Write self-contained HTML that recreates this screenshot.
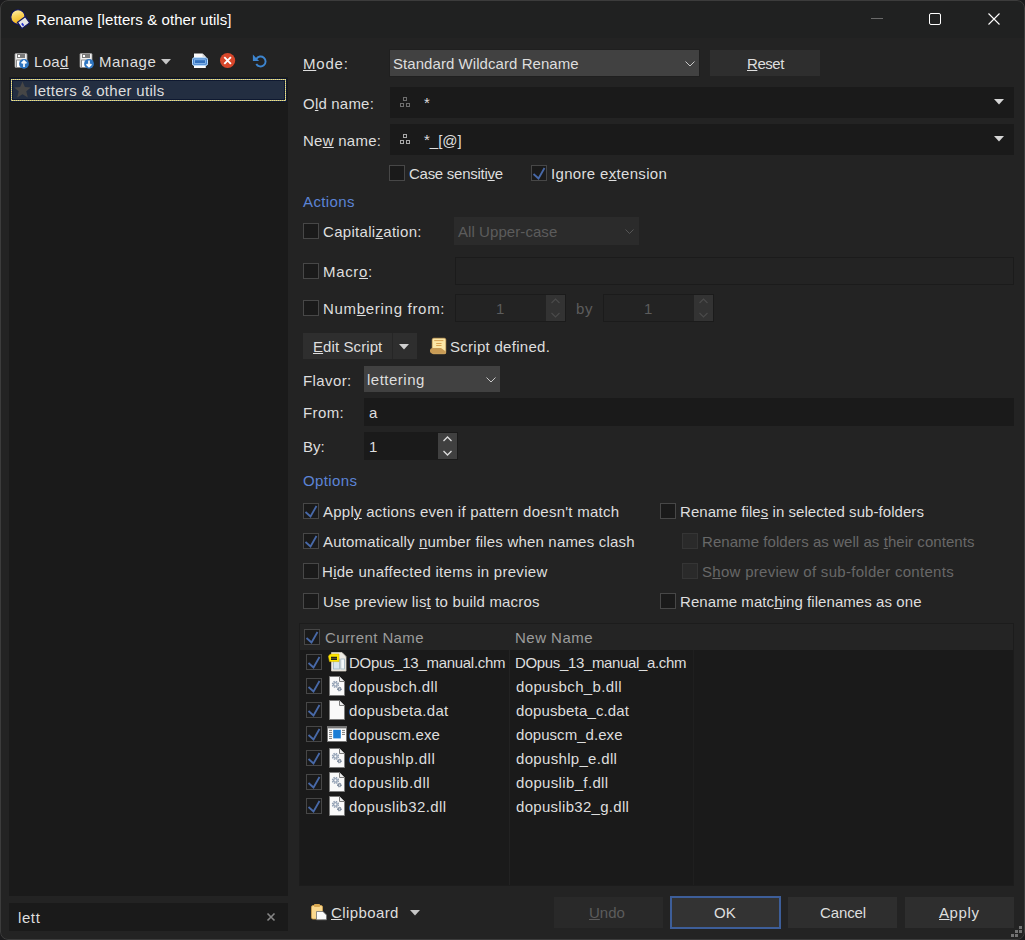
<!DOCTYPE html>
<html><head><meta charset="utf-8">
<style>
*{margin:0;padding:0;box-sizing:border-box}
html,body{width:1025px;height:940px;overflow:hidden;background:#1b1b1d}
body{position:relative;font-family:"Liberation Sans",sans-serif}
#win{position:absolute;left:0;top:0;width:1025px;height:940px;border-radius:8px;background:#232323;overflow:hidden}
#frame{position:absolute;left:0;top:0;width:1025px;height:940px;border:1px solid #3c3c3c;border-radius:8px}
.a{position:absolute}
.t{position:absolute;font-size:15px;line-height:20px;height:20px;white-space:pre;color:#dedede}
.u{text-decoration:underline;text-decoration-thickness:1px;text-underline-offset:1px}
.dis{color:#5c5c5c}
.box{position:absolute;background:#1a1a1a}
.cmb{position:absolute;background:#414141}
.btn{position:absolute;background:#2e2e2e}
.cb{position:absolute;width:16px;height:16px;border:1px solid #474747;background:#1a1a1a}
.cbd{position:absolute;width:16px;height:16px;border:1px solid #353535;background:#2a2a2a}
.hdr{color:#5c84d6}
svg{position:absolute;overflow:visible}
</style></head><body>
<svg width="0" height="0" style="position:absolute">
  <defs>
    <symbol id="chk" viewBox="0 0 16 16"><path d="M2.5 9 L7.5 13.5 L13.5 3" fill="none" stroke="#4869a8" stroke-width="1.8" stroke-linejoin="miter"/></symbol>
    <symbol id="page" viewBox="0 0 16 20"><path d="M0.5 0.5 H10.5 L15.5 5.5 V19.5 H0.5 Z" fill="#f9f9f9" stroke="#7b7b7b"/><path d="M10.5 0.5 V5.5 H15.5" fill="#ececec" stroke="#7b7b7b"/></symbol>
    <symbol id="gear" viewBox="0 0 10 10"><circle cx="5" cy="5" r="3.9" fill="none" stroke="#95a3b6" stroke-width="2" stroke-dasharray="1.9 1.16"/><circle cx="5" cy="5" r="2.3" fill="none" stroke="#95a3b6" stroke-width="1.8"/></symbol>
    <symbol id="gear2" viewBox="0 0 10 10"><circle cx="5" cy="5" r="3.9" fill="none" stroke="#5f6f86" stroke-width="2" stroke-dasharray="1.9 1.16"/><circle cx="5" cy="5" r="2.3" fill="none" stroke="#5f6f86" stroke-width="1.8"/></symbol>
  </defs>
</svg>
<div id="win">
  <!-- title bar -->
  <div class="a" style="left:0;top:0;width:1025px;height:38px;background:#202121"></div>
  <svg style="left:10px;top:9px" width="20" height="20" viewBox="0 0 20 20">
    <defs><linearGradient id="gy" x1="0" y1="0" x2="0.3" y2="1"><stop offset="0" stop-color="#fff3c0"/><stop offset="0.5" stop-color="#f9d25a"/><stop offset="1" stop-color="#f2b51c"/></linearGradient></defs>
    <circle cx="8" cy="8" r="7.2" fill="url(#gy)" stroke="#101563" stroke-width="1.1"/>
    <g transform="translate(13.6 13.6) rotate(-36)"><rect x="-4.8" y="-3.8" width="9.6" height="7.6" fill="#e4e4e4" stroke="#101563" stroke-width="1.2"/><rect x="-3.4" y="0.2" width="3" height="1.8" fill="#2330d0" transform="rotate(90 -1.9 1.1)"/></g>
  </svg>
  <div class="t" style="letter-spacing:0.07px;left:36px;top:10px;color:#fff">Rename [letters &amp; other utils]</div>
  <div class="a" style="left:871px;top:18px;width:12px;height:1px;background:#6a6a6a"></div>
  <div class="a" style="left:929px;top:13px;width:12px;height:12px;border:1px solid #fff;border-radius:2px"></div>
  <svg style="left:988px;top:13px" width="12" height="12" viewBox="0 0 12 12"><path d="M0.5 0.5 L11.5 11.5 M11.5 0.5 L0.5 11.5" stroke="#fff" stroke-width="1.1"/></svg>

  <!-- left panel toolbar -->
  <svg style="left:14px;top:53px" width="16" height="16" viewBox="0 0 16 16">
    <rect x="1" y="0.5" width="12" height="14" rx="1" fill="#eeeeee" stroke="#9a9a9a" stroke-width="0.8"/>
    <rect x="3" y="1" width="8" height="4" fill="#7a7a7a"/><rect x="4" y="2" width="2" height="2" fill="#fff"/>
    <rect x="2.6" y="7" width="8.8" height="7.4" fill="#fff" stroke="#777" stroke-width="0.8"/>
    <circle cx="10" cy="10.8" r="4.9" fill="#2f76c1"/><path d="M10 14 V8.2 M7.6 10.4 L10 8 L12.4 10.4" stroke="#fff" stroke-width="1.7" fill="none"/>
  </svg>
  <div class="t" style="letter-spacing:0.3px;left:34px;top:52px">Loa<span class="u">d</span></div>
  <svg style="left:79px;top:53px" width="16" height="16" viewBox="0 0 16 16">
    <rect x="1" y="0.5" width="12" height="14" rx="1" fill="#eeeeee" stroke="#9a9a9a" stroke-width="0.8"/>
    <rect x="3" y="1" width="8" height="4" fill="#7a7a7a"/><rect x="4" y="2" width="2" height="2" fill="#fff"/>
    <rect x="2.6" y="7" width="8.8" height="7.4" fill="#fff" stroke="#777" stroke-width="0.8"/>
    <circle cx="10" cy="10.8" r="4.9" fill="#2f76c1"/><path d="M10 7.6 V13.4 M7.6 11.2 L10 13.6 L12.4 11.2" stroke="#fff" stroke-width="1.7" fill="none"/>
  </svg>
  <div class="t" style="letter-spacing:0.5px;left:99px;top:52px">Mana<span class="u">g</span>e</div>
  <svg style="left:161px;top:59px" width="10" height="6" viewBox="0 0 10 6"><path d="M0 0 H10 L5 5.5 Z" fill="#c6c6c6"/></svg>
  <svg style="left:192px;top:53px" width="16" height="16" viewBox="0 0 16 16">
    <path d="M2 0.5 H10.5 L13.8 3.8 V15 H2 Z" fill="#fafafa"/><path d="M10.5 0.5 V3.8 H13.8 Z" fill="#cfcfcf"/>
    <rect x="0.5" y="4.8" width="15" height="7.6" rx="1.6" fill="#4a86cf" stroke="#bcdfff" stroke-width="1"/>
    <rect x="2.6" y="6.8" width="10.8" height="3.6" fill="#3270bd" stroke="#9cc8f2" stroke-width="0.7"/>
  </svg>
  <svg style="left:220px;top:53px" width="16" height="16" viewBox="0 0 16 16">
    <circle cx="7.6" cy="7.5" r="7.6" fill="#d8472b"/><path d="M4.3 4.2 L10.9 10.8 M10.9 4.2 L4.3 10.8" stroke="#fff" stroke-width="1.9"/>
  </svg>
  <svg style="left:252px;top:53px" width="16" height="16" viewBox="0 0 16 16">
    <path d="M4.3 5.9 A5 5 0 1 1 4.26 10.98" fill="none" stroke="#3d85cf" stroke-width="1.9"/>
    <path d="M0.9 1.6 V8 H7.1 Z" fill="#3d85cf"/>
  </svg>

  <!-- left list -->
  <div class="box" style="left:9px;top:77px;width:279px;height:819px"></div>
  <div class="a" style="left:10px;top:78px;width:277px;height:24px;background:#232e41;border:1px solid #0d1830"></div>
  <svg style="left:10px;top:78px" width="277" height="24" viewBox="0 0 277 24"><rect x="2.5" y="2.5" width="272" height="19" fill="none" stroke="#0e1830" shape-rendering="crispEdges"/><rect x="1.5" y="1.5" width="274" height="21" fill="none" stroke="#a9a68c" shape-rendering="crispEdges"/><rect x="1.5" y="1.5" width="274" height="21" fill="none" stroke="#f2e67a" stroke-dasharray="1 1" stroke-dashoffset="0.5" shape-rendering="crispEdges"/></svg>
  <svg style="left:14px;top:81px" width="18" height="18" viewBox="0 0 18 18"><path d="M8.5 0.5 L10.9 6 L16.8 6.4 L12.3 10.3 L13.8 16.6 L8.5 13.2 L3.2 16.6 L4.7 10.3 L0.2 6.4 L6.1 6 Z" fill="#464646"/></svg>
  <div class="t" style="letter-spacing:0.3px;left:34px;top:81px">letters &amp; other utils</div>
  <div class="box" style="left:9px;top:903px;width:279px;height:28px"></div>
  <div class="t" style="letter-spacing:0.6px;left:18px;top:908px">lett</div>
  <svg style="left:267px;top:913px" width="8" height="8" viewBox="0 0 8 8"><path d="M0.5 0.5 L7.5 7.5 M7.5 0.5 L0.5 7.5" stroke="#868686" stroke-width="1.6"/></svg>

  <!-- right panel -->
  <div class="t" style="letter-spacing:0.8px;left:303px;top:54px"><span class="u">M</span>ode:</div>
  <div class="cmb" style="left:390px;top:50px;width:309px;height:26px;box-shadow:0 0 0 1px #1f1f1f"></div>
  <div class="t" style="letter-spacing:0.06px;left:393px;top:54px">Standard Wildcard Rename</div>
  <svg style="left:685px;top:61px" width="10" height="6" viewBox="0 0 10 6"><path d="M0.5 0.5 L5 5 L9.5 0.5" fill="none" stroke="#c8c8c8" stroke-width="1"/></svg>
  <div class="btn" style="left:710px;top:50px;width:110px;height:26px"></div>
  <div class="t" style="letter-spacing:-0.45px;left:747px;top:54px"><span class="u">R</span>eset</div>

  <div class="t" style="letter-spacing:0.2px;left:303px;top:94px">O<span class="u">l</span>d name:</div>
  <div class="box" style="left:390px;top:87px;width:624px;height:31px"></div>
  <svg style="left:400px;top:97px" width="10" height="10" viewBox="0 0 10 10"><g fill="none" stroke="#6e6e6e" stroke-width="1"><rect x="3.5" y="0.5" width="3" height="3"/><rect x="0.5" y="6.5" width="3" height="3"/><rect x="6.5" y="6.5" width="3" height="3"/></g></svg>
  <div class="t" style="left:424px;top:93px">*</div>
  <svg style="left:994px;top:99px" width="10" height="6" viewBox="0 0 10 6"><path d="M0 0 H10 L5 5.5 Z" fill="#d6d6d6"/></svg>
  <div class="t" style="letter-spacing:0.25px;left:303px;top:131px">Ne<span class="u">w</span> name:</div>
  <div class="box" style="left:390px;top:124px;width:624px;height:31px"></div>
  <svg style="left:400px;top:134px" width="10" height="10" viewBox="0 0 10 10"><g fill="none" stroke="#a8a8a8" stroke-width="1"><rect x="3.5" y="0.5" width="3" height="3"/><rect x="0.5" y="6.5" width="3" height="3"/><rect x="6.5" y="6.5" width="3" height="3"/></g></svg>
  <div class="t" style="left:424px;top:131px"><span style="position:relative;top:-1px">*</span>_[@]</div>
  <svg style="left:994px;top:136px" width="10" height="6" viewBox="0 0 10 6"><path d="M0 0 H10 L5 5.5 Z" fill="#d6d6d6"/></svg>

  <div class="cb" style="left:389px;top:165px"></div>
  <div class="t" style="letter-spacing:-0.27px;left:409px;top:164px">Case sensiti<span class="u">v</span>e</div>
  <div class="cb" style="left:531px;top:165px"><svg style="left:-1px;top:-1px" width="16" height="16"><use href="#chk"/></svg></div>
  <div class="t" style="letter-spacing:0.33px;left:551px;top:164px">Ignore e<span class="u">x</span>tension</div>

  <div class="t hdr" style="letter-spacing:0.4px;left:303px;top:192px">Actions</div>
  <div class="cb" style="left:303px;top:223px"></div>
  <div class="t" style="letter-spacing:0.3px;left:323px;top:222px">Capitali<span class="u">z</span>ation:</div>
  <div class="a" style="left:454px;top:217px;width:185px;height:28px;background:#2b2b2b"></div>
  <div class="t dis" style="letter-spacing:0.07px;left:458px;top:222px">All Upper-case</div>
  <svg style="left:625px;top:229px" width="9" height="5" viewBox="0 0 9 5"><path d="M0.5 0.5 L4.5 4.5 L8.5 0.5" fill="none" stroke="#565656" stroke-width="1"/></svg>

  <div class="cb" style="left:303px;top:263px"></div>
  <div class="t" style="letter-spacing:0.67px;left:323px;top:262px">Macr<span class="u">o</span>:</div>
  <div class="a" style="left:455px;top:257px;width:559px;height:28px;border:1px solid #1b1b1b"></div>

  <div class="cb" style="left:303px;top:300px"></div>
  <div class="t" style="letter-spacing:0.7px;left:323px;top:299px">Num<span class="u">b</span>ering from:</div>
  <div class="a" style="left:455px;top:294px;width:111px;height:28px;border:1px solid #1b1b1b"></div>
  <div class="a" style="left:546px;top:295px;width:19px;height:26px;background:#333"></div>
  <svg style="left:551px;top:298px" width="9" height="20" viewBox="0 0 9 20"><path d="M0.5 5 L4.5 1 L8.5 5 M0.5 15 L4.5 19 L8.5 15" fill="none" stroke="#4a4a4a" stroke-width="1.2"/></svg>
  <div class="t dis" style="left:496px;top:299px">1</div>
  <div class="t dis" style="letter-spacing:0.6px;left:576px;top:299px">by</div>
  <div class="a" style="left:603px;top:294px;width:111px;height:28px;border:1px solid #1b1b1b"></div>
  <div class="a" style="left:694px;top:295px;width:19px;height:26px;background:#333"></div>
  <svg style="left:699px;top:298px" width="9" height="20" viewBox="0 0 9 20"><path d="M0.5 5 L4.5 1 L8.5 5 M0.5 15 L4.5 19 L8.5 15" fill="none" stroke="#4a4a4a" stroke-width="1.2"/></svg>
  <div class="t dis" style="left:644px;top:299px">1</div>

  <div class="btn" style="left:303px;top:333px;width:114px;height:26px"></div>
  <div class="a" style="left:392px;top:333px;width:1px;height:26px;background:#262626"></div>
  <div class="t" style="letter-spacing:0.09px;left:313px;top:337px"><span class="u">E</span>dit Script</div>
  <svg style="left:399px;top:344px" width="10" height="6" viewBox="0 0 10 6"><path d="M0 0 H10 L5 5.5 Z" fill="#d0d0d0"/></svg>
  <svg style="left:430px;top:338px" width="16" height="16" viewBox="0 0 16 16">
    <rect x="2.2" y="0.2" width="13.6" height="15.6" rx="1.5" fill="#fde7a6" stroke="#e0b060" stroke-width="0.6"/>
    <path d="M4.2 2.6 H13.4 M6.2 5.5 H11.5 M6.2 7.5 H11.5" stroke="#d9a454" stroke-width="1"/>
    <path d="M0 11.8 Q0.4 10.2 2.6 10 H11 L15.8 13.5 V15.8 H2.4 Q0.3 15.5 0 13.5 Z" fill="#c99b55"/>
  </svg>
  <div class="t" style="letter-spacing:0.28px;left:450px;top:337px">Script defined.</div>

  <div class="t" style="letter-spacing:0.4px;left:303px;top:371px">Flavor:</div>
  <div class="cmb" style="left:364px;top:366px;width:136px;height:26px"></div>
  <div class="t" style="letter-spacing:0.5px;left:367px;top:370px">lettering</div>
  <svg style="left:486px;top:377px" width="10" height="6" viewBox="0 0 10 6"><path d="M0.5 0.5 L5 5 L9.5 0.5" fill="none" stroke="#c8c8c8" stroke-width="1"/></svg>
  <div class="t" style="letter-spacing:0.4px;left:303px;top:403px">From:</div>
  <div class="box" style="left:364px;top:398px;width:650px;height:28px"></div>
  <div class="t" style="left:369px;top:403px">a</div>
  <div class="t" style="left:303px;top:437px">By:</div>
  <div class="box" style="left:364px;top:432px;width:94px;height:28px"></div>
  <div class="a" style="left:438px;top:433px;width:19px;height:26px;background:#404040"></div>
  <svg style="left:443px;top:436px" width="9" height="20" viewBox="0 0 9 20"><path d="M0.5 5 L4.5 1 L8.5 5 M0.5 15 L4.5 19 L8.5 15" fill="none" stroke="#dcdcdc" stroke-width="1.3"/></svg>
  <div class="t" style="left:369px;top:437px">1</div>

  <div class="t hdr" style="letter-spacing:0.38px;left:303px;top:471px">Options</div>
  
  <div class="cb" style="left:303px;top:503px"><svg style="left:-1px;top:-1px" width="16" height="16"><use href="#chk"/></svg></div>
  <div class="t" style="letter-spacing:0.25px;left:323px;top:502px">Appl<span class="u">y</span> actions even if pattern doesn't match</div>
  <div class="cb" style="left:303px;top:533px"><svg style="left:-1px;top:-1px" width="16" height="16"><use href="#chk"/></svg></div>
  <div class="t" style="letter-spacing:0.19px;left:323px;top:532px">Automatically <span class="u">n</span>umber files when names clash</div>
  <div class="cb" style="left:303px;top:563px"></div>
  <div class="t" style="letter-spacing:0.28px;left:322px;top:562px">H<span class="u">i</span>de unaffected items in preview</div>
  <div class="cb" style="left:303px;top:593px"></div>
  <div class="t" style="letter-spacing:0.18px;left:323px;top:592px">Use preview lis<span class="u">t</span> to build macros</div>
  <div class="cb" style="left:660px;top:503px"></div>
  <div class="t" style="letter-spacing:0.06px;left:680px;top:502px">Rename file<span class="u">s</span> in selected sub-folders</div>
  <div class="cbd" style="left:682px;top:533px"></div>
  <div class="t dis" style="letter-spacing:0.06px;left:702px;top:532px;color:#686868">Rename folders as well as <span class="u">t</span>heir contents</div>
  <div class="cbd" style="left:682px;top:563px"></div>
  <div class="t dis" style="letter-spacing:0.29px;left:702px;top:562px;color:#686868">S<span class="u">h</span>ow preview of sub-folder contents</div>
  <div class="cb" style="left:660px;top:593px"></div>
  <div class="t" style="letter-spacing:0.07px;left:680px;top:592px">Rename matc<span class="u">h</span>ing filenames as one</div>


  <!-- file list -->
  <div class="box" style="left:299px;top:623px;width:715px;height:263px;border:1px solid #1c1c1c"></div>
  
  <div class="a" style="left:300px;top:624px;width:713px;height:26px;background:#242424"></div>
  <div class="cb" style="left:304px;top:629px"><svg style="left:-1px;top:-1px" width="16" height="16"><use href="#chk"/></svg></div>
  <div class="t" style="letter-spacing:0.4px;left:325px;top:628px;color:#9c9c9c">Current Name</div>
  <div class="t" style="letter-spacing:0.48px;left:515px;top:628px;color:#9c9c9c">New Name</div>
  <div class="a" style="left:509px;top:650px;width:1px;height:235px;background:#222"></div>
  <div class="a" style="left:693px;top:650px;width:1px;height:235px;background:#1f1f1f"></div>
  <div class="cb" style="left:306px;top:654px"><svg style="left:-1px;top:-1px" width="16" height="16"><use href="#chk"/></svg></div>
  <svg style="left:328px;top:652px" width="20" height="20" viewBox="0 0 20 20">
    <path d="M3.5 0.5 H14 L18 4.5 V19 H3.5 Z" fill="#eeebe4" stroke="#cfcac0" stroke-width="0.8"/>
    <rect x="5.5" y="7" width="6" height="10" fill="#d8e6ee" stroke="#9fb3c0" stroke-width="0.8"/>
    <rect x="12.8" y="7" width="3.6" height="10" fill="#f4f8fa" stroke="#9fb3c0" stroke-width="0.8"/>
    <path d="M0.5 4.5 Q1 2 4 2 H11 V9.6 H1.5 Z" fill="#ffe800" stroke="#d8b800" stroke-width="0.6"/>
    <path d="M3 5.5 H9 M3 7.2 H9" stroke="#222" stroke-width="1.4"/>
  </svg>
  <div class="t" style="letter-spacing:-0.29px;left:349px;top:653px">DOpus_13_manual.chm</div>
  <div class="t" style="letter-spacing:-0.35px;left:515px;top:653px">DOpus_13_manual_a.chm</div>
  <div class="cb" style="left:306px;top:678px"><svg style="left:-1px;top:-1px" width="16" height="16"><use href="#chk"/></svg></div>
  <svg style="left:329px;top:676px" width="16" height="20" viewBox="0 0 16 20"><use href="#page" width="16" height="20"/><use href="#gear" x="2.6" y="4.6" width="7.6" height="7.6"/><use href="#gear2" x="7.9" y="10.6" width="5" height="5"/></svg>
  <div class="t" style="letter-spacing:0.39px;left:349px;top:677px">dopusbch.dll</div>
  <div class="t" style="letter-spacing:0.35px;left:516px;top:677px">dopusbch_b.dll</div>
  <div class="cb" style="left:306px;top:702px"><svg style="left:-1px;top:-1px" width="16" height="16"><use href="#chk"/></svg></div>
  <svg style="left:329px;top:700px" width="16" height="20" viewBox="0 0 16 20"><use href="#page" width="16" height="20"/></svg>
  <div class="t" style="letter-spacing:0.35px;left:349px;top:701px">dopusbeta.dat</div>
  <div class="t" style="letter-spacing:0.15px;left:516px;top:701px">dopusbeta_c.dat</div>
  <div class="cb" style="left:306px;top:726px"><svg style="left:-1px;top:-1px" width="16" height="16"><use href="#chk"/></svg></div>
  <svg style="left:327px;top:726px" width="20" height="16" viewBox="0 0 20 16">
    <rect x="0.5" y="0.5" width="19" height="15" fill="#fdfdfd" stroke="#757575"/>
    <rect x="1" y="1" width="18" height="1.4" fill="#757575"/>
    <rect x="6.2" y="3.8" width="7.6" height="8.6" fill="#1b7ed6"/>
    <path d="M2 4.4 H5 M2 6.4 H5 M2 8.4 H5 M2 10.4 H5 M2 12.4 H5 M15 4.4 H18 M15 6.4 H18 M15 8.4 H18" stroke="#7c7c7c" stroke-width="1"/>
  </svg>
  <div class="t" style="letter-spacing:0.17px;left:349px;top:725px">dopuscm.exe</div>
  <div class="t" style="letter-spacing:0.05px;left:516px;top:725px">dopuscm_d.exe</div>
  <div class="cb" style="left:306px;top:750px"><svg style="left:-1px;top:-1px" width="16" height="16"><use href="#chk"/></svg></div>
  <svg style="left:329px;top:748px" width="16" height="20" viewBox="0 0 16 20"><use href="#page" width="16" height="20"/><use href="#gear" x="2.6" y="4.6" width="7.6" height="7.6"/><use href="#gear2" x="7.9" y="10.6" width="5" height="5"/></svg>
  <div class="t" style="letter-spacing:0.52px;left:349px;top:749px">dopushlp.dll</div>
  <div class="t" style="letter-spacing:0.32px;left:516px;top:749px">dopushlp_e.dll</div>
  <div class="cb" style="left:306px;top:774px"><svg style="left:-1px;top:-1px" width="16" height="16"><use href="#chk"/></svg></div>
  <svg style="left:329px;top:772px" width="16" height="20" viewBox="0 0 16 20"><use href="#page" width="16" height="20"/><use href="#gear" x="2.6" y="4.6" width="7.6" height="7.6"/><use href="#gear2" x="7.9" y="10.6" width="5" height="5"/></svg>
  <div class="t" style="letter-spacing:0.5px;left:349px;top:773px">dopuslib.dll</div>
  <div class="t" style="letter-spacing:0.35px;left:516px;top:773px">dopuslib_f.dll</div>
  <div class="cb" style="left:306px;top:798px"><svg style="left:-1px;top:-1px" width="16" height="16"><use href="#chk"/></svg></div>
  <svg style="left:329px;top:796px" width="16" height="20" viewBox="0 0 16 20"><use href="#page" width="16" height="20"/><use href="#gear" x="2.6" y="4.6" width="7.6" height="7.6"/><use href="#gear2" x="7.9" y="10.6" width="5" height="5"/></svg>
  <div class="t" style="letter-spacing:0.41px;left:349px;top:797px">dopuslib32.dll</div>
  <div class="t" style="letter-spacing:0.3px;left:516px;top:797px">dopuslib32_g.dll</div>


  <!-- bottom -->
  
  <svg style="left:311px;top:904px" width="16" height="16" viewBox="0 0 16 16">
    <rect x="0.5" y="1.5" width="11" height="13.5" rx="1.5" fill="#fbd98f" stroke="#d7a650" stroke-width="0.8"/>
    <rect x="3" y="0" width="6" height="3" rx="0.8" fill="#d9a851"/>
    <path d="M5.5 7.5 H12 L15.5 11 V15.8 H5.5 Z" fill="#fafafa" stroke="#707070" stroke-width="0.8"/>
  </svg>
  <div class="t" style="letter-spacing:0.4px;left:331px;top:903px"><span class="u">C</span>lipboard</div>
  <svg style="left:410px;top:910px" width="10" height="6" viewBox="0 0 10 6"><path d="M0 0 H10 L5 5.5 Z" fill="#c6c6c6"/></svg>
  <div class="a" style="left:554px;top:897px;width:109px;height:31px;background:#292929"></div>
  <div class="t dis" style="left:589px;top:903px"><span class="u">U</span>ndo</div>
  <div class="a" style="left:670px;top:896px;width:111px;height:33px;background:#333;border:2px solid #3d5e99"></div>
  <div class="t" style="left:714px;top:903px">OK</div>
  <div class="btn" style="left:788px;top:897px;width:109px;height:31px"></div>
  <div class="t" style="letter-spacing:-0.1px;left:820px;top:903px">Cancel</div>
  <div class="btn" style="left:905px;top:897px;width:109px;height:31px"></div>
  <div class="t" style="letter-spacing:0.6px;left:939px;top:903px"><span class="u">A</span>pply</div>
  <svg style="left:1013px;top:926px" width="10" height="10" viewBox="0 0 10 10"><g fill="#727272"><rect x="6" y="0" width="3" height="3"/><rect x="2" y="4" width="3" height="3"/><rect x="6" y="4" width="3" height="3"/><rect x="-2" y="8" width="3" height="3"/><rect x="2" y="8" width="3" height="3"/></g></svg>

  <div id="frame"></div>
</div>
</body></html>
